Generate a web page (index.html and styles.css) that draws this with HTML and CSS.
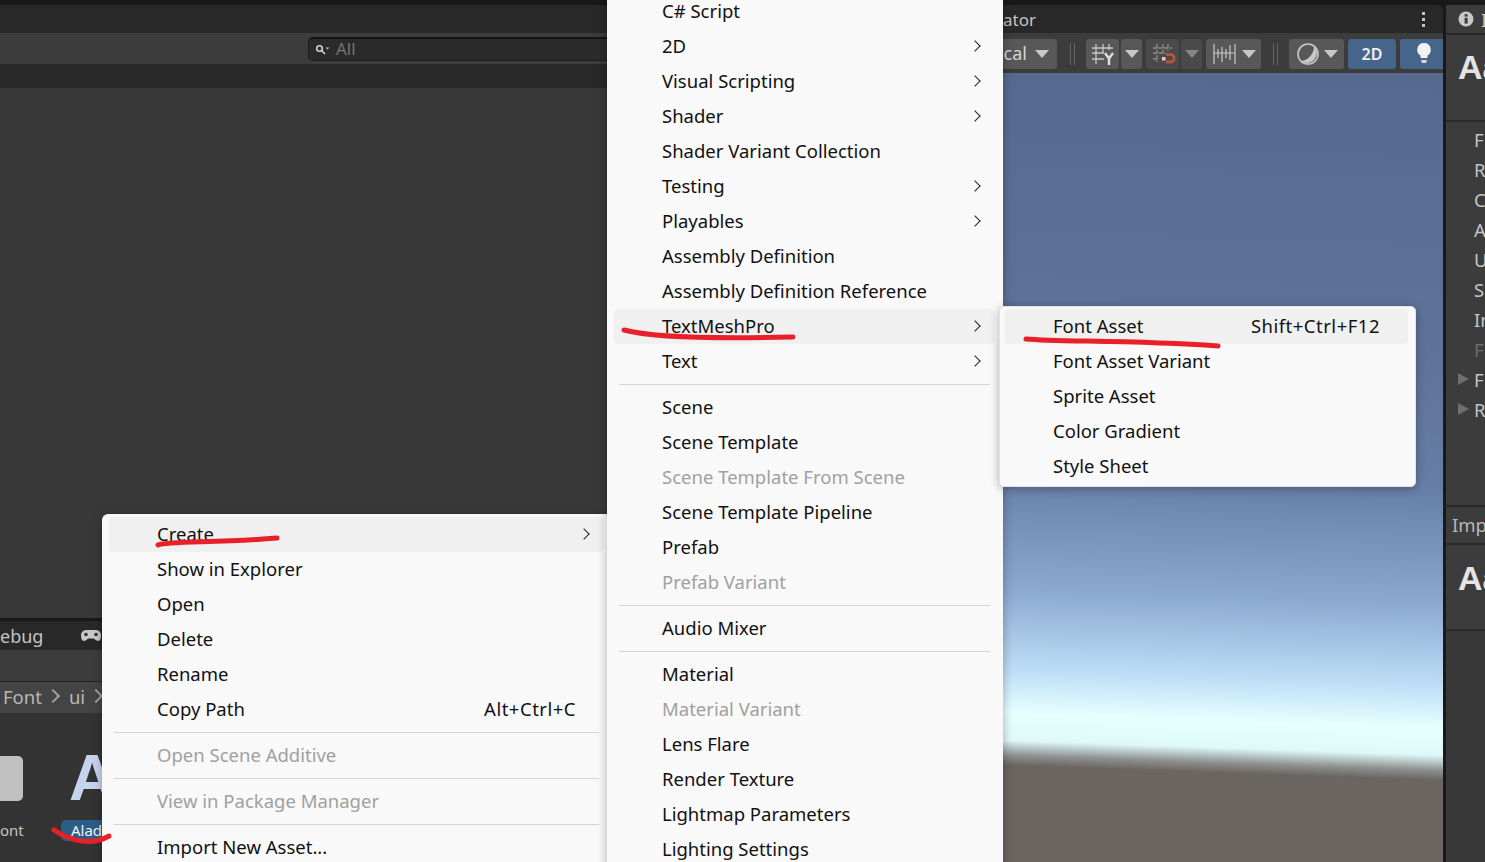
FILE: index.html
```
<!DOCTYPE html>
<html>
<head>
<meta charset="utf-8">
<title>Create Font Asset</title>
<link rel="stylesheet" href="styles.css">
</head>
<body>
<div class="editor">

	<div class="left-panel">
		<div class="tab-row"></div>
		<div class="search-bar">
			<div class="search-field">
				<svg class="search-icon" width="16" height="12" viewBox="0 0 16 12"><circle cx="4.5" cy="4.5" r="2.8" fill="none" stroke="#d0d0d0" stroke-width="1.6"/><path d="M6.6 6.6L10 10" stroke="#d0d0d0" stroke-width="1.6"/><path d="M10.5 3.5h4l-2 2z" fill="#c0c0c0"/></svg>
				<span>All</span>
			</div>
		</div>
		<div class="list-head"></div>
		<div class="hierarchy"></div>
		<div class="bottom-tabs">
			<span class="debug-label">ebug</span>
			<svg class="pad-icon" width="22" height="13" viewBox="0 0 22 13"><path d="M6 1h10a5 5 0 0 1 5 5.500c0 3-1 5.500-3 5.500-2.500 0-3-2.500-4.500-2.500h-5C7 9.500 6.500 12 4 12c-2 0-3-2.500-3-5.500A5 5 0 0 1 6 1z" fill="#c8c8c8"/><circle cx="6" cy="5.500" r="1.800" fill="#333"/><circle cx="16" cy="5.500" r="1.800" fill="#333"/></svg>
		</div>
		<div class="bottom-toolbar"></div>
		<div class="breadcrumbs">
			<span>Font</span><i class="crumb"></i><span>ui</span><i class="crumb"></i>
		</div>
		<div class="assets">
			<div class="asset asset-font">
				<div class="asset-box"></div>
				<div class="asset-name">ont</div>
			</div>
			<div class="asset asset-alad">
				<div class="asset-glyph">A</div>
				<div class="asset-name selected">Alad</div>
			</div>
		</div>
	</div>

	<div class="scene-panel">
		<div class="scene-tabs">
			<span class="scene-tab">ator</span>
			<div class="kebab"><i></i><i></i><i></i></div>
		</div>
		<div class="scene-toolbar">
			<div class="btn btn-local"><span>cal</span><b class="tri"></b></div>
			<div class="tool-sep"></div>
			<div class="btn btn-icon">
				<svg width="26" height="24" viewBox="0 0 26 24" fill="none" stroke="#c8c8c8" stroke-width="1.3"><path d="M6 2v20M13 2v9M19 2v6M2 6h21M2 11h12M2 17h12"/><path d="M15 11l4 5.500 4-5.500M19 16.500V23" stroke="#e0e0e0" stroke-width="2.400"/></svg>
			</div>
			<div class="btn btn-drop"><b class="tri"></b></div>
			<div class="btn btn-icon off">
				<svg width="26" height="24" viewBox="0 0 26 24" fill="none" stroke="#8f8f8f" stroke-width="1.3" stroke-dasharray="4 1.500"><path d="M7 2v18M13 2v10M18 2v7M3 6h19M3 11h12M3 17h6"/><rect x="12" y="15" width="3.500" height="3.500" fill="#d0d0d0" stroke="none"/><path d="M16 12.500h4.500a3.500 3.500 0 0 1 0 7.500H16" stroke="#b5553a" stroke-width="2.800" stroke-dasharray="none"/></svg>
			</div>
			<div class="btn btn-drop off"><b class="tri dim"></b></div>
			<div class="btn btn-ruler">
				<svg width="25" height="24" viewBox="0 0 25 24" fill="none" stroke="#c8c8c8" stroke-width="1.2"><path d="M2 2v20M23 2v20M2 11h21M6 7v9M10 5v15M14 7v9M18 3v15"/></svg>
				<b class="tri"></b>
			</div>
			<div class="tool-sep"></div>
			<div class="btn btn-shade">
				<svg width="24" height="24" viewBox="0 0 24 24"><circle cx="12" cy="12" r="10" fill="none" stroke="#c8c8c8" stroke-width="1.600"/><path d="M18 4A10 10 0 0 1 5 19.100 15 15 0 0 0 18 4z" fill="#c8c8c8"/></svg>
				<b class="tri"></b>
			</div>
			<div class="btn btn-2d">2D</div>
			<div class="btn btn-light">
				<svg width="16" height="24" viewBox="0 0 16 24"><path d="M8 1a6.800 6.800 0 0 0-3.500 12.600V16h7v-2.400A6.800 6.800 0 0 0 8 1z" fill="#f2f2f2"/><path d="M5 18h6l-1 3H6z" fill="#d8d8d8"/></svg>
			</div>
		</div>
		<div class="scene-view"></div>
	</div>

	<div class="inspector">
		<div class="insp-tab">
			<svg width="16" height="16" viewBox="0 0 16 16"><circle cx="8" cy="8" r="7.500" fill="#c8c8c8"/><rect x="6.600" y="6.800" width="3" height="5.800" fill="#3c3c3c"/><rect x="6.600" y="3.200" width="3" height="2.400" fill="#3c3c3c"/></svg>
			<span>I</span>
		</div>
		<div class="insp-head">Aa</div>
		<div class="insp-rows">
			<div class="insp-row">F</div>
			<div class="insp-row">R</div>
			<div class="insp-row">C</div>
			<div class="insp-row">A</div>
			<div class="insp-row">U</div>
			<div class="insp-row">S</div>
			<div class="insp-row">In</div>
			<div class="insp-row dim">F</div>
			<div class="insp-row fold">F</div>
			<div class="insp-row fold">R</div>
		</div>
		<div class="insp-import">Imp</div>
		<div class="insp-preview">Aa</div>
		<div class="insp-rest"></div>
	</div>
</div>

<div class="menu menu-context">
	<div class="menu-row sub on">Create</div>
	<div class="menu-row">Show in Explorer</div>
	<div class="menu-row">Open</div>
	<div class="menu-row">Delete</div>
	<div class="menu-row">Rename</div>
	<div class="menu-row">Copy Path<span class="keys">Alt+Ctrl+C</span></div>
	<div class="menu-sep"></div>
	<div class="menu-row dim">Open Scene Additive</div>
	<div class="menu-sep"></div>
	<div class="menu-row dim">View in Package Manager</div>
	<div class="menu-sep"></div>
	<div class="menu-row">Import New Asset...</div>
</div>

<div class="menu menu-create">
	<div class="menu-row">C# Script</div>
	<div class="menu-row sub">2D</div>
	<div class="menu-row sub">Visual Scripting</div>
	<div class="menu-row sub">Shader</div>
	<div class="menu-row">Shader Variant Collection</div>
	<div class="menu-row sub">Testing</div>
	<div class="menu-row sub">Playables</div>
	<div class="menu-row">Assembly Definition</div>
	<div class="menu-row">Assembly Definition Reference</div>
	<div class="menu-row sub on">TextMeshPro</div>
	<div class="menu-row sub">Text</div>
	<div class="menu-sep"></div>
	<div class="menu-row">Scene</div>
	<div class="menu-row">Scene Template</div>
	<div class="menu-row dim">Scene Template From Scene</div>
	<div class="menu-row">Scene Template Pipeline</div>
	<div class="menu-row">Prefab</div>
	<div class="menu-row dim">Prefab Variant</div>
	<div class="menu-sep"></div>
	<div class="menu-row">Audio Mixer</div>
	<div class="menu-sep"></div>
	<div class="menu-row">Material</div>
	<div class="menu-row dim">Material Variant</div>
	<div class="menu-row">Lens Flare</div>
	<div class="menu-row">Render Texture</div>
	<div class="menu-row">Lightmap Parameters</div>
	<div class="menu-row">Lighting Settings</div>
</div>

<div class="menu menu-tmp">
	<div class="menu-row on">Font Asset<span class="keys">Shift+Ctrl+F12</span></div>
	<div class="menu-row">Font Asset Variant</div>
	<div class="menu-row">Sprite Asset</div>
	<div class="menu-row">Color Gradient</div>
	<div class="menu-row">Style Sheet</div>
</div>

<svg class="scribbles" width="1485" height="862" viewBox="0 0 1485 862" fill="none" stroke="#e8202a" stroke-width="5" stroke-linecap="round">
	<path d="M158 545C166 541 220 543 277 538"/>
	<path d="M624 330C650 337 710 339 793 337"/>
	<path d="M1026 339C1060 342 1130 340 1218 346"/>
	<path d="M54 830C70 841 92 846 109 836"/>
</svg>
</body>
</html>
```

FILE: styles.css
```
html, body {
	margin:0;
	height:100%;
	overflow:hidden;
}
body {
	position:relative;
	background:#191919;
	font-family:"Noto Sans", "Open Sans", sans-serif;
	font-size:18.5px;
}
.editor {
	display:grid;
	grid-template-columns:607px 836px 39px;
	height:857px;
	padding-top:5px;
	color:#c4c4c4;
}

/* left side */
.left-panel {
	display:flex;
	flex-direction:column;
	overflow:hidden;
}
.tab-row {
	height:28px;
	background:#282828;
}
.search-bar {
	height:31px;
	background:#3c3c3c;
	padding:4px 0 0 308px;
	box-sizing:border-box;
}
.search-field {
	display:flex;
	align-items:center;
	height:24px;
	width:320px;
	box-sizing:border-box;
	background:#2a2a2a;
	border:1px solid #1e1e1e;
	border-top:2px solid #141414;
	border-radius:5px;
	color:#757575;
	font-size:17px;
	padding:0 0 2px 6px;
}
.search-icon {
	margin:2px 5px 0 0;
}
.list-head {
	height:24px;
	background:#282828;
}
.hierarchy {
	height:530px;
	background:#383838;
}
.bottom-tabs {
	display:flex;
	align-items:center;
	height:29px;
	margin-top:3px;
	background:#282828;
}
.debug-label {
	font-size:18px;
}
.pad-icon {
	margin-left:37px;
}
.bottom-toolbar {
	height:32px;
	background:#3c3c3c;
	border-bottom:1px solid #232323;
	box-sizing:border-box;
}
.breadcrumbs {
	display:flex;
	align-items:center;
	height:31px;
	padding:0 0 3px 3px;
	box-sizing:border-box;
	background:#444;
	color:#b8b8b8;
}
.crumb {
	width:8px;
	height:8px;
	margin:0 11px 0 6px;
	border-top:2px solid #a0a0a0;
	border-right:2px solid #a0a0a0;
	transform:rotate(45deg);
}
.assets {
	flex:1;
	display:flex;
	gap:38px;
	background:#333;
	padding-top:43px;
}
.asset {
	display:flex;
	flex-direction:column;
}
.asset-font {
	width:23px;
}
.asset-alad {
	width:80px;
}
.asset-box {
	width:23px;
	height:45px;
	background:#c0c0c0;
	border-radius:0 5px 5px 0;
}
.asset-glyph {
	height:45px;
	padding-left:8px;
	font:bold 64px/45px "Liberation Sans", sans-serif;
	color:#c5d3ec;
}
.asset-name {
	margin-top:19px;
	font-size:15px;
	line-height:21px;
	white-space:nowrap;
}
.asset-name.selected {
	margin-top:19px;
	padding-left:10px;
	color:#f4f4f4;
	background:#2c5d87;
	border-radius:5px;
}

/* scene */
.scene-panel {
	display:flex;
	flex-direction:column;
	overflow:hidden;
}
.scene-tabs {
	display:flex;
	align-items:center;
	justify-content:space-between;
	height:28px;
	background:#282828;
	border-top-right-radius:6px;
	padding-right:18px;
}
.scene-tab {
	margin-left:396px;
	font-size:17px;
}
.kebab {
	display:flex;
	flex-direction:column;
	gap:3px;
}
.kebab i {
	width:3px;
	height:3px;
	background:#c4c4c4;
}
.scene-toolbar {
	display:flex;
	justify-content:flex-end;
	height:40px;
	box-sizing:border-box;
	padding-top:6px;
	background:#3c3c3c;
}
.btn {
	display:flex;
	align-items:center;
	justify-content:center;
	height:30px;
	box-sizing:border-box;
	background:#585858;
	border-radius:3px;
	color:#d4d4d4;
}
.btn.off {
	background:#4a4a4a;
}
.tri {
	width:0;
	height:0;
	border-left:7px solid transparent;
	border-right:7px solid transparent;
	border-top:8px solid #c8c8c8;
}
.tri.dim {
	border-top-color:#858585;
}
.btn-local {
	width:100px;
	margin-right:13px;
	justify-content:flex-end;
	gap:8px;
	padding-right:8px;
	font-size:18px;
}
.btn-local span {
	margin-bottom:2px;
}
.btn-icon {
	width:33px;
	margin-right:2px;
}
.btn-drop {
	width:21px;
	margin-right:4px;
}
.btn-ruler {
	width:55px;
	gap:5px;
}
.btn-shade {
	width:55px;
	margin-right:4px;
	gap:4px;
}
.tool-sep {
	width:5px;
	height:22px;
	margin:4px 11px 0 0;
	border-left:1px solid #636363;
	border-right:1px solid #636363;
	box-sizing:border-box;
}
.btn-ruler + .tool-sep {
	margin-left:12px;
}
.btn-2d {
	width:48px;
	margin-right:4px;
	background:#46658a;
	color:#f0f0f0;
	font-size:16px;
	font-weight:600;
}
.btn-light {
	width:43px;
	padding-left:5px;
	background:#46658a;
	border-radius:3px 0 0 3px;
}
.scene-view {
	flex:1;
	background:linear-gradient(182deg, #566a8f 8px, #5f7499 300px, #667ea6 415px, #8ba8cf 530px, #bcdcf6 610px, #e6ffff 655px, #dff8f8 682px, #8d9190 697px, #6b6561 707px, #6b6561 100%);
}

/* inspector */
.inspector {
	margin-left:3px;
	display:flex;
	flex-direction:column;
	width:39px;
	overflow:hidden;
	white-space:nowrap;
	background:#3c3c3c;
}
.insp-tab {
	display:flex;
	align-items:center;
	gap:7px;
	height:28px;
	padding-left:12px;
	border-top-left-radius:6px;
}
.insp-tab svg {
	flex:none;
}
.insp-head {
	height:89px;
	box-sizing:border-box;
	border-top:2px solid #282828;
	border-bottom:2px solid #2a2a2a;
	padding:9px 0 0 12px;
	font:bold 34px/46px "Liberation Sans", sans-serif;
	color:#e4e4e4;
}
.insp-rows {
	height:385px;
	box-sizing:border-box;
	padding-top:3px;
	border-bottom:2px solid #2a2a2a;
}
.insp-row {
	height:30px;
	line-height:30px;
	padding-left:28px;
	position:relative;
}
.insp-row.dim {
	color:#6e6e6e;
}
.insp-row.fold::before {
	content:"";
	position:absolute;
	left:12px;
	top:8px;
	border-left:11px solid #6e6e6e;
	border-top:6.5px solid transparent;
	border-bottom:6.5px solid transparent;
}
.insp-import {
	height:38px;
	box-sizing:border-box;
	line-height:35px;
	padding-left:6px;
	border-bottom:2px solid #2a2a2a;
	color:#b8b8b8;
}
.insp-preview {
	height:86px;
	box-sizing:border-box;
	padding:10px 0 0 12px;
	border-bottom:2px solid #2a2a2a;
	font:bold 34px/46px "Liberation Sans", sans-serif;
	color:#e4e4e4;
}
.insp-rest {
	flex:1;
	background:#383838;
}

/* popup menus */
.menu {
	position:absolute;
	box-sizing:border-box;
	padding:3.5px 8px 3.5px 7px;
	background:#f9f9f9;
	color:#111;
	box-shadow:0 2px 10px rgba(0, 0, 0, .3);
}
.menu-context {
	left:102px;
	top:514px;
	width:505px;
	height:360px;
	padding:3px 3px 0 7px;
	border-radius:6px 0 0 0;
}
.menu-create {
	left:607px;
	top:-10px;
	width:396px;
	height:890px;
}
.menu-tmp {
	left:999px;
	top:306px;
	width:417px;
	height:181px;
	padding:2px 7px 0 5px;
	border-radius:5px;
	border:1px solid #e4e4e4;
}
.menu-row {
	position:relative;
	display:flex;
	justify-content:space-between;
	height:35px;
	line-height:33px;
	padding:0 28px 0 48px;
	border-radius:4px;
	white-space:nowrap;
}
.menu-row.on {
	background:#f0f0f0;
}
.menu-row.dim {
	color:#a0a0a0;
}
.menu-row.sub::after {
	content:"";
	position:absolute;
	right:16px;
	top:13px;
	width:7px;
	height:7px;
	border-top:1.5px solid #222;
	border-right:1.5px solid #222;
	transform:rotate(45deg);
}
.keys {
	letter-spacing:.5px;
}
.menu-sep {
	height:1px;
	margin:5px;
	background:#d4d4d4;
}
.scribbles {
	position:absolute;
	left:0;
	top:0;
	pointer-events:none;
}
```
